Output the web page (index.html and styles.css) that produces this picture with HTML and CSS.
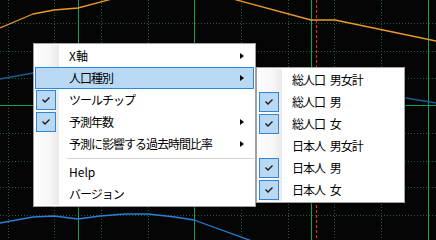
FILE: index.html
```html
<!DOCTYPE html>
<html lang="ja">
<head>
<meta charset="utf-8">
<title>Menu</title>
<link rel="stylesheet" href="styles.css">
</head>
<body>
<div class="stage">
  <svg class="chart" width="436" height="240" viewBox="0 0 436 240" xmlns="http://www.w3.org/2000/svg">
    <rect width="436" height="240" fill="#050505"/>
    <g stroke="#1c5e3a" stroke-width="1" stroke-dasharray="1 2">
      <line x1="8.5" y1="0" x2="8.5" y2="240"/>
      <line x1="54.5" y1="0" x2="54.5" y2="240"/>
      <line x1="101.5" y1="0" x2="101.5" y2="240"/>
      <line x1="148.5" y1="0" x2="148.5" y2="240"/>
      <line x1="241.5" y1="0" x2="241.5" y2="240"/>
      <line x1="288.5" y1="0" x2="288.5" y2="240"/>
      <line x1="334.5" y1="0" x2="334.5" y2="240"/>
      <line x1="381.5" y1="0" x2="381.5" y2="240"/>
      <line x1="0" y1="23.5" x2="436" y2="23.5"/>
      <line x1="0" y1="51.5" x2="436" y2="51.5"/>
      <line x1="0" y1="78.5" x2="436" y2="78.5"/>
      <line x1="0" y1="133.5" x2="436" y2="133.5"/>
      <line x1="0" y1="161.5" x2="436" y2="161.5"/>
      <line x1="0" y1="187.5" x2="436" y2="187.5"/>
      <line x1="0" y1="215.5" x2="436" y2="215.5"/>
    </g>
    <g stroke="#0fa05c" stroke-width="1">
      <line x1="78.5" y1="0" x2="78.5" y2="240"/>
      <line x1="194.5" y1="0" x2="194.5" y2="240"/>
      <line x1="311.5" y1="0" x2="311.5" y2="240"/>
      <line x1="428.5" y1="0" x2="428.5" y2="240"/>
      <line x1="0" y1="105.5" x2="436" y2="105.5"/>
    </g>
    <line x1="316.5" y1="0" x2="316.5" y2="240" stroke="#ff1e1e" stroke-width="1" stroke-dasharray="3 2"/>
    <g fill="none" stroke-width="1.3" stroke-linejoin="round">
      <polyline stroke="#e89a2c" points="0,28 33,14 54,10 78,8 112,-1"/>
      <polyline stroke="#e89a2c" points="233,-1 311,20 335,20 436,41"/>
      <polyline stroke="#1a5c92" points="0,79 33,73 120,60 300,70 400,97 436,103"/>
      <polyline stroke="#2a7fd6" points="0,223 33,217 54,216 78,219 100,216 125,214 148,214 175,217 194,220 252,241"/>
    </g>
  </svg>

  <div class="menu main-menu">
    <div class="item"><span class="gutter"></span><span class="label latin">X軸</span><span class="arrow"></span></div>
    <div class="item hl"><span class="gutter"></span><span class="label">人口種別</span><span class="arrow"></span></div>
    <div class="item"><span class="gutter"><span class="check"><svg width="20" height="20" viewBox="0 0 20 20"><polyline points="6.5,9.5 9,12 13.5,7.5" fill="none" stroke="#1a1a1a" stroke-width="1.4"/></svg></span></span><span class="label">ツールチップ</span></div>
    <div class="item"><span class="gutter"><span class="check"><svg width="20" height="20" viewBox="0 0 20 20"><polyline points="6.5,9.5 9,12 13.5,7.5" fill="none" stroke="#1a1a1a" stroke-width="1.4"/></svg></span></span><span class="label">予測年数</span><span class="arrow"></span></div>
    <div class="item"><span class="gutter"></span><span class="label">予測に影響する過去時間比率</span><span class="arrow"></span></div>
    <div class="sep"></div>
    <div class="item"><span class="gutter"></span><span class="label latin">Help</span></div>
    <div class="item"><span class="gutter"></span><span class="label">バージョン</span></div>
  </div>

  <div class="menu sub-menu">
    <div class="item"><span class="gutter"></span><span class="label">総人口 男女計</span></div>
    <div class="item"><span class="gutter"><span class="check"><svg width="20" height="20" viewBox="0 0 20 20"><polyline points="6.5,9.5 9,12 13.5,7.5" fill="none" stroke="#1a1a1a" stroke-width="1.4"/></svg></span></span><span class="label">総人口 男</span></div>
    <div class="item"><span class="gutter"><span class="check"><svg width="20" height="20" viewBox="0 0 20 20"><polyline points="6.5,9.5 9,12 13.5,7.5" fill="none" stroke="#1a1a1a" stroke-width="1.4"/></svg></span></span><span class="label">総人口 女</span></div>
    <div class="item"><span class="gutter"></span><span class="label">日本人 男女計</span></div>
    <div class="item"><span class="gutter"><span class="check"><svg width="20" height="20" viewBox="0 0 20 20"><polyline points="6.5,9.5 9,12 13.5,7.5" fill="none" stroke="#1a1a1a" stroke-width="1.4"/></svg></span></span><span class="label">日本人 男</span></div>
    <div class="item"><span class="gutter"><span class="check"><svg width="20" height="20" viewBox="0 0 20 20"><polyline points="6.5,9.5 9,12 13.5,7.5" fill="none" stroke="#1a1a1a" stroke-width="1.4"/></svg></span></span><span class="label">日本人 女</span></div>
  </div>
</div>
</body>
</html>
```

FILE: styles.css
```css
html, body {
  margin: 0;
  padding: 0;
  background: #050505;
}
.stage {
  position: relative;
  width: 436px;
  height: 240px;
  overflow: hidden;
  font-family: "Noto Sans CJK JP", "Noto Sans", sans-serif;
  font-size: 12px;
  color: #000;
}
.chart {
  display: block;
}
.menu {
  position: absolute;
  box-sizing: border-box;
  border: 1px solid #a0a0a0;
  padding: 1px;
  background-color: #fff;
  background-image: linear-gradient(to right, #fdfdfd 0%, #f7f7f7 60%, #e9e9e9 100%);
  background-repeat: no-repeat;
  background-position: 1px 1px;
  background-size: 24px calc(100% - 2px);
  box-shadow: 1px 1px 1px rgba(0, 0, 0, 0.35);
  display: flex;
  flex-direction: column;
}
.main-menu {
  left: 33px;
  top: 43px;
  width: 223px;
}
.sub-menu {
  left: 256px;
  top: 67px;
  width: 149px;
}
.item {
  height: 22px;
  display: flex;
  align-items: center;
  position: relative;
}
.item.hl {
  background: #b9d8f3;
  box-shadow: inset 0 0 0 1px #2f86d8;
}
.gutter {
  width: 34px;
  height: 22px;
  flex: none;
  display: flex;
  align-items: center;
}
.check {
  box-sizing: border-box;
  width: 20px;
  height: 20px;
  margin-left: 1px;
  background: #b9d8f3;
  border: 1px solid #2f86d8;
  display: flex;
  align-items: center;
  justify-content: center;
}
.check svg {
  display: block;
  flex: none;
  margin: -1px;
}
.label {
  line-height: 22px;
  white-space: nowrap;
  letter-spacing: -1px;
  word-spacing: 3px;
}
.label.latin {
  letter-spacing: 0;
}
.arrow {
  margin-left: auto;
  margin-right: 10px;
  width: 0;
  height: 0;
  border-top: 3.5px solid transparent;
  border-bottom: 3.5px solid transparent;
  border-left: 4px solid #000;
}
.sep {
  height: 6px;
  display: flex;
  align-items: center;
  padding-left: 32px;
}
.sep::after {
  content: "";
  display: block;
  flex: 1;
  height: 1px;
  background: #d2d2d2;
}
```
